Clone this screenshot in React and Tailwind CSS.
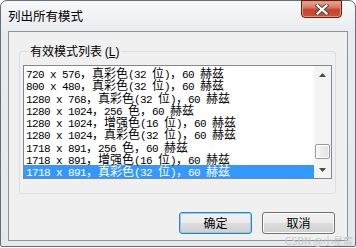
import React from 'react';

const cjk = "font-['Noto_Sans_CJK_SC','Noto_Sans_CJK_JP',sans-serif]";

const modes = [
  '720 x 576，真彩色(32 位)，60 赫兹',
  '800 x 480，真彩色(32 位)，60 赫兹',
  '1280 x 768，真彩色(32 位)，60 赫兹',
  '1280 x 1024，256 色，60 赫兹',
  '1280 x 1024，增强色(16 位)，60 赫兹',
  '1280 x 1024，真彩色(32 位)，60 赫兹',
  '1718 x 891，256 色，60 赫兹',
  '1718 x 891，增强色(16 位)，60 赫兹',
  '1718 x 891，真彩色(32 位)，60 赫兹',
];

// SimSun-like mix: half-width ascii 6px, full-width CJK 12px
const Mixed = ({ text }) =>
  text.match(/[\x00-\x7f]+|[^\x00-\x7f]+/g).map((run, i) =>
    /^[\x00-\x7f]+$/.test(run) ? (
      <span key={i} className="font-['Liberation_Mono',monospace] text-[11px] leading-[8px] tracking-[-0.6px]">{run}</span>
    ) : (
      <span key={i}>{run}</span>
    )
  );

const Arrow = ({ down }) => (
  <svg width="7" height="4" viewBox="0 0 7 4">
    <path d={down ? 'M0 0H7L3.5 4Z' : 'M0 4H7L3.5 0Z'} fill="#4a4a4a" />
  </svg>
);

const WinButton = ({ label, primary }) => (
  <button
    className={`w-[73px] h-[22px] rounded-[3px] border ${cjk} text-[12px] leading-none text-black bg-[linear-gradient(#f2f2f2_0%,#ebebeb_50%,#dddddd_51%,#cfcfcf_100%)] ${
      primary
        ? 'border-[#3c7fb1] shadow-[inset_0_0_0_1px_#7fd3f7]'
        : 'border-[#707070] shadow-[inset_0_0_0_1px_#fbfbfb]'
    }`}
  >
    {label}
  </button>
);

export default function App() {
  return (
    <div className="w-[356px] h-[248px] bg-white">
      <div className="w-[356px] h-[247px] flex flex-col rounded-t-[7px] rounded-b-[2px] border border-[#6a6d72] bg-[linear-gradient(#f7f8fa,#e9ecef_30px,#e6e9ec)]">
        {/* Title bar */}
        <div className="h-[30px] flex items-start justify-between pl-[7px] pr-[13px]">
          <span className={`${cjk} text-[12.5px] leading-[15px] text-black mt-[7px]`}>列出所有模式</span>
          <button className="w-[41px] h-[18px] -mt-px flex items-center justify-center rounded-b-[4px] border border-[#5c2218] bg-[linear-gradient(#e9a997_0%,#d77a63_40%,#c7432b_55%,#cf5137_100%)] shadow-[inset_0_0_0_1px_#e6947f]">
            <svg width="14" height="11" viewBox="0 0 14 11">
              <path d="M2.5 1.5L11.5 9.5M11.5 1.5L2.5 9.5" stroke="#4a4a4a" strokeWidth="4" strokeLinecap="square" />
              <path d="M2.5 1.5L11.5 9.5M11.5 1.5L2.5 9.5" stroke="#ffffff" strokeWidth="2.2" strokeLinecap="square" />
            </svg>
          </button>
        </div>

        {/* Client area */}
        <div className="mx-[7px] h-[210px] border border-[#8d939a] bg-[#f0f0f0] flex flex-col relative">
          <fieldset className="ml-[10px] mr-[11px] mt-[11px] h-[151px] border border-[#d5dfe5] rounded-[3px] px-[3px] pb-[15px]">
            <legend className={`ml-[5px] px-[2px] ${cjk} text-[12px] leading-[16px] text-black`}>
              有效模式列表 <span className="font-['Liberation_Sans',sans-serif]">(<span className="underline">L</span>)</span>
            </legend>

            {/* Listbox */}
            <div className="mt-[5px] h-[114px] border border-[#828790] bg-white flex">
              <div className="flex-1 pt-px">
                {modes.map((m, i) => (
                  <div
                    key={m}
                    className={`h-[12.3px] ${cjk} text-[12px] leading-[12.3px] whitespace-pre pl-[2px] ${
                      i === modes.length - 1 ? 'bg-[#3399ff] text-white' : 'text-black'
                    }`}
                  >
                    <Mixed text={m} />
                  </div>
                ))}
              </div>

              {/* Scrollbar */}
              <div className="w-[17px] flex flex-col bg-[#f4f4f4]">
                <div className="h-[17px] flex items-center justify-center">
                  <Arrow />
                </div>
                <div className="flex-1 flex flex-col justify-end pb-[2px]">
                  <div className="h-[15px] mx-px rounded-[2px] border border-[#9a9a9a] bg-[linear-gradient(90deg,#f6f6f6,#e2e2e2)] shadow-[inset_0_0_0_1px_#ffffff]" />
                </div>
                <div className="h-[17px] flex items-center justify-center">
                  <Arrow down />
                </div>
              </div>
            </div>
          </fieldset>

          <div className="mt-[18px] mr-[12px] flex justify-end gap-[10px]">
            <WinButton label="确定" primary />
            <WinButton label="取消" />
          </div>

          <span className={`absolute right-[-6px] bottom-[-6px] ${cjk} text-[10px] leading-none text-[#c8c8c8]`}>
            CSDN @小星宸
          </span>
        </div>
      </div>
    </div>
  );
}
